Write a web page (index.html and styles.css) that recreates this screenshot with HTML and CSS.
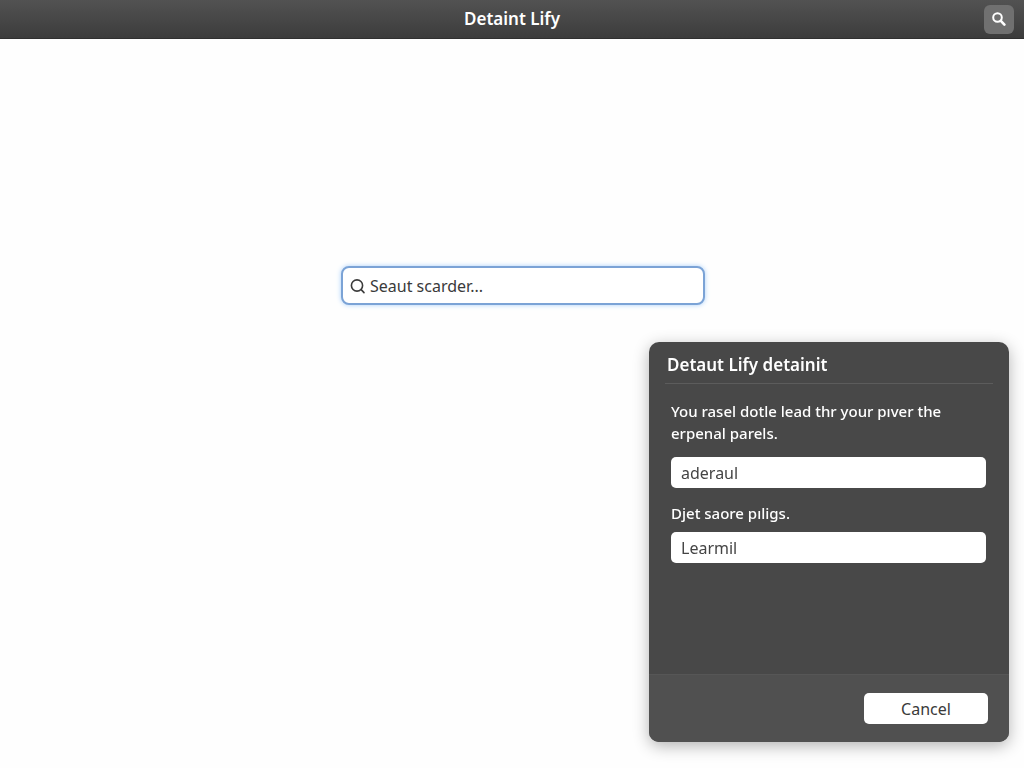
FILE: index.html
```html
<!DOCTYPE html>
<html lang="en">
<head>
	<meta charset="utf-8" />
	<title>Detaint Lify</title>
	<link rel="stylesheet" href="styles.css">
</head>
<body>
<header class="topbar">
	<h1>Detaint Lify</h1>
	<button type="button" class="topbar-search" aria-label="Search">
		<svg width="14" height="14" viewBox="0 0 14 14" fill="none" stroke="#fff">
			<circle cx="5.5" cy="5.5" r="4.3" stroke-width="2" />
			<path d="M8.8 8.8L12.4 12.6" stroke-width="2.6" stroke-linecap="round" />
		</svg>
	</button>
</header>

<main class="content">
	<label class="search">
		<svg width="16" height="16" viewBox="0 0 16 16" fill="none" stroke="#3c3c3c" stroke-width="1.6">
			<circle cx="7" cy="7.5" r="5.6" />
			<path d="M11.2 11.6L14 14.6" stroke-linecap="round" />
		</svg>
		<input type="text" value="Seaut scarder..." aria-label="Search" />
	</label>
</main>

<section class="dialog" role="dialog" aria-labelledby="dialogTitle">
	<h2 id="dialogTitle">Detaut Lify detainit</h2>
	<form class="dialog-body">
		<label class="intro" for="firstField">You rasel dotle lead thr your pıver the erpenal parels.</label>
		<input type="text" id="firstField" value="aderaul" />
		<label for="secondField">Djet saore pıligs.</label>
		<input type="text" id="secondField" value="Learmil" />
	</form>
	<footer class="dialog-foot">
		<button type="button">Cancel</button>
	</footer>
</section>
</body>
</html>
```

FILE: styles.css
```css
*{
	box-sizing: border-box;
}
body{
	margin: 0;
	min-height: 100vh;
	background-color: #fefefe;
	color: #3a3a3a;
	font-family: "Noto Sans", "Open Sans", sans-serif;
	font-size: 16px;
}
input, button{
	font: inherit;
	color: inherit;
}
/* top bar */
.topbar{
	display: grid;
	grid-template-columns: 1fr auto 1fr;
	align-items: center;
	height: 39px;
	padding: 0 10px;
	background: linear-gradient(#525252, #3c3c3c);
	border-bottom: 1px solid #303030;
	color: #fff;
}
.topbar h1{
	grid-column: 2;
	margin: 0;
	font-size: 17px;
	font-weight: 600;
	line-height: 24px;
}
.topbar-search{
	display: flex;
	align-items: center;
	justify-content: center;
	justify-self: end;
	width: 30px;
	height: 29px;
	padding: 0;
	background-color: #707070;
	border: none;
	border-radius: 6px;
}
/* main search */
.content{
	display: flex;
	justify-content: center;
	padding: 227px 0 0 22px;
}
.search{
	display: flex;
	align-items: center;
	gap: 4px;
	width: 364px;
	height: 39px;
	padding: 0 7px;
	background-color: #fff;
	border: 2px solid #7ba3d6;
	border-radius: 8px;
	box-shadow: 0 0 5px #a9d0fa;
}
.search input{
	flex: 1;
	min-width: 0;
	padding: 0;
	background: none;
	border: none;
	outline: none;
}
/* dialog */
.dialog{
	position: fixed;
	right: 15px;
	bottom: 26px;
	display: flex;
	flex-direction: column;
	width: 360px;
	min-height: 400px;
	background-color: #484848;
	border-radius: 10px;
	box-shadow: 0 4px 16px rgba(0, 0, 0, 0.3);
	color: #fff;
	overflow: hidden;
}
.dialog h2{
	margin: 0 16px;
	padding: 11px 2px 6px;
	border-bottom: 1px solid #5c5c5c;
	font-size: 17px;
	font-weight: 600;
	line-height: 24px;
}
.dialog-body{
	display: flex;
	flex: 1;
	flex-direction: column;
	padding: 16px 23px 24px 22px;
}
.dialog-body label{
	font-size: 15px;
	font-weight: 500;
	line-height: 22px;
}
.dialog-body .intro{
	padding-right: 36px;
}
.dialog-body input{
	height: 31px;
	margin: 13px 0 14px;
	padding: 0 10px;
	background-color: #fff;
	border: none;
	border-radius: 5px;
	color: #444;
}
.dialog-body label + input:last-child{
	margin-top: 8px;
}
.dialog-foot{
	display: flex;
	justify-content: flex-end;
	padding: 18px 21px;
	background-color: #505050;
	border-top: 1px solid #565656;
}
.dialog-foot button{
	width: 124px;
	height: 31px;
	padding: 0;
	background-color: #fff;
	border: none;
	border-radius: 5px;
	color: #3a3a3a;
}
```
